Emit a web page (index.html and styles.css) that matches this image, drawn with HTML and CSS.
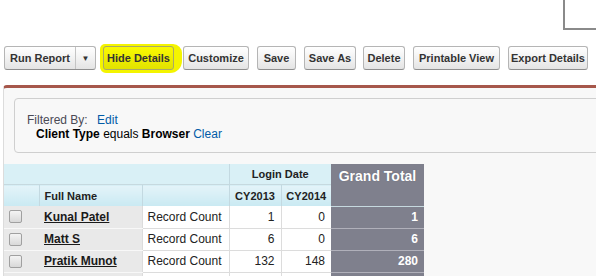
FILE: index.html
```html
<!DOCTYPE html>
<html lang="en">
  <head>
    <meta charset="UTF-8" />
    <title>Report</title>
    <link rel="stylesheet" href="styles.css">
  </head>
  <body>
    <div class="top">
      <div class="corner-box"></div>
    </div>
    <div class="toolbar">
      <div class="split-btn">
        <span class="split-main">Run Report</span>
        <span class="split-arrow">&#9660;</span>
      </div>
      <div class="marker">
        <a class="btn btn-marked">Hide Details</a>
      </div>
      <a class="btn btn-customize">Customize</a>
      <a class="btn btn-save">Save</a>
      <a class="btn btn-save-as">Save As</a>
      <a class="btn btn-delete">Delete</a>
      <a class="btn btn-print">Printable View</a>
      <a class="btn btn-export">Export Details</a>
    </div>
    <div class="panel">
      <div class="filters">
        <div class="filter-head">Filtered By: <a class="link edit">Edit</a></div>
        <div class="filter-line">
          <b>Client Type</b> equals <b>Browser</b> <a class="link">Clear</a>
        </div>
      </div>
      <table class="report">
        <colgroup>
          <col class="c-check" />
          <col class="c-name" />
          <col class="c-label" />
          <col class="c-year" />
          <col class="c-year2" />
          <col class="c-total" />
        </colgroup>
        <thead>
          <tr class="head-1">
            <th colspan="3"></th>
            <th colspan="2" class="group">Login Date</th>
            <th rowspan="2" class="total-head">Grand Total</th>
          </tr>
          <tr class="head-2">
            <th class="no-right"></th>
            <th class="name-head">Full Name</th>
            <th></th>
            <th>CY2013</th>
            <th>CY2014</th>
          </tr>
        </thead>
        <tbody>
          <tr>
            <td class="check"><span class="box"></span></td>
            <td class="name"><a>Kunal Patel</a></td>
            <td class="label">Record Count</td>
            <td class="num">1</td>
            <td class="num">0</td>
            <td class="num total">1</td>
          </tr>
          <tr>
            <td class="check"><span class="box"></span></td>
            <td class="name"><a>Matt S</a></td>
            <td class="label">Record Count</td>
            <td class="num">6</td>
            <td class="num">0</td>
            <td class="num total">6</td>
          </tr>
          <tr>
            <td class="check"><span class="box"></span></td>
            <td class="name"><a>Pratik Munot</a></td>
            <td class="label">Record Count</td>
            <td class="num">132</td>
            <td class="num">148</td>
            <td class="num total">280</td>
          </tr>
          <tr>
            <td class="check"></td>
            <td class="name"></td>
            <td class="label"></td>
            <td class="num"></td>
            <td class="num"></td>
            <td class="num total"></td>
          </tr>
        </tbody>
      </table>
    </div>
  </body>
</html>
```

FILE: styles.css
```css
body {
  margin: 0;
  background-color: #fff;
  font-family: "Liberation Sans", Arial, sans-serif;
  color: #222;
  overflow: hidden;
}
.top {
  display: flex;
  justify-content: flex-end;
  height: 30px;
}
.corner-box {
  width: 31px;
  height: 28px;
  border-left: 2px solid #8a8a8a;
  border-bottom: 2px solid #8a8a8a;
}
.toolbar {
  display: flex;
  align-items: center;
  margin-top: 16px;
  padding-left: 4px;
  height: 24px;
}
.btn,
.split-btn {
  display: flex;
  align-items: center;
  justify-content: center;
  box-sizing: border-box;
  height: 24px;
  padding: 0;
  margin-right: 8px;
  border: 1px solid #b5b5b5;
  border-bottom-color: #8f8f8f;
  border-radius: 3px;
  background: linear-gradient(#ffffff, #f2f2f2 50%, #e4e4e4);
  color: #333;
  font-size: 11px;
  font-weight: bold;
  white-space: nowrap;
}
.split-btn {
  margin-right: 4px;
}
.split-main {
  box-sizing: border-box;
  width: 71px;
  height: 22px;
  line-height: 22px;
  text-align: center;
  border-right: 1px solid #c4c4c4;
}
.split-arrow {
  width: 19px;
  text-align: center;
  font-size: 8px;
  color: #333;
}
.marker {
  display: flex;
  align-items: center;
  height: 29px;
  padding: 0 8px 0 3px;
  margin-right: 1px;
  background-color: #f4f400;
  border-radius: 5px 9px 12px 6px;
}
.btn-marked {
  width: 71px;
  margin-right: 0;
  background: linear-gradient(#fafa00, #eeee00 50%, #e2e200);
  border-color: #a8a86a;
}
.btn-customize { width: 66px; }
.btn-save { width: 39px; }
.btn-save-as { width: 52px; margin-right: 7px; }
.btn-delete { width: 42px; }
.btn-print { width: 87px; }
.btn-export { width: 80px; }
.panel {
  width: 640px;
  margin: 15px 0 0 3px;
  min-height: 200px;
  background-color: #f8f8f8;
  border-top: 3px solid #a6574b;
  border-left: 1px solid #dcdcdc;
  border-top-left-radius: 4px;
}
.filters {
  box-sizing: border-box;
  height: 55px;
  margin: 10px 0 0 10px;
  padding: 14px 0 0 12px;
  border: 1px solid #cfcfcf;
  border-radius: 4px;
  font-size: 12px;
  line-height: 14px;
}
.filter-head {
  color: #4a4a56;
}
.edit {
  margin-left: 6px;
}
.filter-line {
  padding-left: 9px;
  color: #000;
}
.link {
  color: #015ba7;
}
.report {
  margin-top: 11px;
  border-collapse: collapse;
  table-layout: fixed;
  font-size: 12px;
}
.c-check { width: 35px; }
.c-name { width: 103px; }
.c-label { width: 87px; }
.c-year { width: 52px; }
.c-year2 { width: 50px; }
.c-total { width: 93px; }
.report th {
  padding: 0;
  font-size: 11px;
  font-weight: bold;
  color: #222;
  text-align: center;
}
.head-1 th {
  height: 20px;
  background-color: #d9f0f6;
  border-bottom: 1px solid #c6d9df;
}
.head-1 .group {
  border-left: 1px solid #c3d9e1;
}
.head-2 th {
  height: 21px;
  background: linear-gradient(#e4f4f9, #c9e9f2);
  border-left: 1px solid #c3d9e1;
}
.head-2 th.no-right {
  border-left: none;
}
.head-2 .name-head {
  text-align: left;
  padding-left: 5px;
}
.report th.total-head {
  vertical-align: top;
  padding-top: 4px;
  background-color: #7f808d;
  color: #fff;
  font-size: 14px;
  text-shadow: 0 0 1px #5a5a66;
}
.report td {
  height: 21px;
  padding: 0 6px 0 5px;
  border-bottom: 1px solid #dcdcdc;
  border-left: 1px solid #dcdcdc;
  background-color: #fff;
  white-space: nowrap;
}
.report td.check {
  border-left: none;
  background-color: #e9e9e9;
  border-bottom-color: #f8f8f8;
  padding-left: 5px;
}
.report td.name {
  background-color: #e9e9e9;
  border-left: none;
  border-bottom-color: #f8f8f8;
}
.name a {
  color: #1a1a1a;
  font-weight: bold;
  text-decoration: underline;
}
.num {
  text-align: right;
}
.report td.total {
  background-color: #7f808d;
  color: #fff;
  font-weight: bold;
  border-left: none;
  border-bottom-color: #b0b0ba;
}
.box {
  display: block;
  width: 11px;
  height: 11px;
  border: 1px solid #a0a0a0;
  border-radius: 2px;
  background: linear-gradient(#f4f4f4, #d8d8d8);
}
```
